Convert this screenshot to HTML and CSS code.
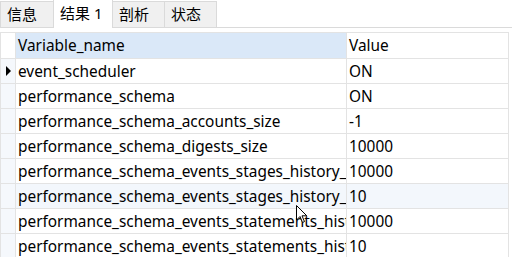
FILE: index.html
```html
<!DOCTYPE html>
<html lang="zh-CN">
<head>
    <meta charset="UTF-8">
    <title>结果 1</title>
    <link rel="stylesheet" href="styles.css">
</head>
<body>
    <div class="tabs">
        <div class="tab">信息</div>
        <div class="tab active">结果 1</div>
        <div class="tab">剖析</div>
        <div class="tab">状态</div>
    </div>

    <div class="result">
        <table class="grid">
            <colgroup>
                <col class="c-ind">
                <col class="c-name">
                <col class="c-val">
            </colgroup>
            <tr class="head">
                <th class="ind"></th>
                <th class="sel">Variable_name</th>
                <th>Value</th>
            </tr>
            <tr>
                <td class="ind"><span class="arrow"></span></td>
                <td>event_scheduler</td>
                <td>ON</td>
            </tr>
            <tr>
                <td class="ind"></td>
                <td>performance_schema</td>
                <td>ON</td>
            </tr>
            <tr>
                <td class="ind"></td>
                <td>performance_schema_accounts_size</td>
                <td>-1</td>
            </tr>
            <tr>
                <td class="ind"></td>
                <td>performance_schema_digests_size</td>
                <td>10000</td>
            </tr>
            <tr>
                <td class="ind"></td>
                <td>performance_schema_events_stages_history_long_size</td>
                <td>10000</td>
            </tr>
            <tr class="hover">
                <td class="ind"></td>
                <td>performance_schema_events_stages_history_size</td>
                <td>10</td>
            </tr>
            <tr>
                <td class="ind"></td>
                <td>performance_schema_events_statements_history_long_size</td>
                <td>10000</td>
            </tr>
            <tr>
                <td class="ind"></td>
                <td>performance_schema_events_statements_history_size</td>
                <td>10</td>
            </tr>
        </table>

        <!-- mouse pointer -->
        <svg class="cursor" width="12" height="19" viewBox="0 0 12 19">
            <path d="M0.5 0.5 L0.5 15 L4 11.5 L6.5 17.5 L8.5 16.6 L6 10.8 L10.8 10.8 Z" fill="#fff" stroke="#000" stroke-width="1"/>
        </svg>
    </div>
</body>
</html>
```

FILE: styles.css
```css
body {
    margin: 0;
    padding: 0;
    background: #fff;
    font-family: "Noto Sans", "Noto Sans CJK SC", sans-serif;
    color: #000;
}

.tabs {
    display: flex;
    align-items: flex-end;
    height: 27px;
    border-bottom: 1px solid #dadada;
}

.tab {
    height: 25px;
    line-height: 25px;
    padding: 0 6px;
    font-size: 15px;
    background: #f0f0f0;
    border: 1px solid #dadada;
    border-bottom: 0;
    margin-right: -1px;
    color: #000;
}

.tab:first-child {
    width: 40px;
}

.tab.active {
    height: 28px;
    line-height: 27px;
    margin-bottom: -1px;
    background: #fff;
    width: 46px;
}

.tab:nth-child(3),
.tab:nth-child(4) {
    width: 39px;
}

.result {
    position: relative;
    margin-top: 4px;
}

.grid {
    border-collapse: collapse;
    table-layout: fixed;
    width: 508px;
    font-size: 15.4px;
}

.c-ind { width: 15px; }
.c-name { width: 331px; }
.c-val { width: 162px; }

.grid th,
.grid td {
    height: 24px;
    padding: 0 0 0 2px;
    border: 1px solid #e3e3e3;
    text-align: left;
    font-weight: normal;
    white-space: nowrap;
    overflow: hidden;
}

.grid th {
    height: 25px;
}

.grid .head th.sel {
    background: #dae8f8;
}

.grid td.ind {
    background: #f5f8fc;
    position: relative;
    padding: 0;
}

.grid th.ind {
    background: #fff;
}

.grid tr.hover td {
    background: #f3f7fc;
}

.grid tr.hover td.ind {
    background: #f5f8fc;
}

.arrow {
    position: absolute;
    left: 5px;
    top: 7px;
    width: 0;
    height: 0;
    border-top: 5px solid transparent;
    border-bottom: 5px solid transparent;
    border-left: 5px solid #000;
}

.cursor {
    position: absolute;
    left: 296px;
    top: 173px;
}
```
